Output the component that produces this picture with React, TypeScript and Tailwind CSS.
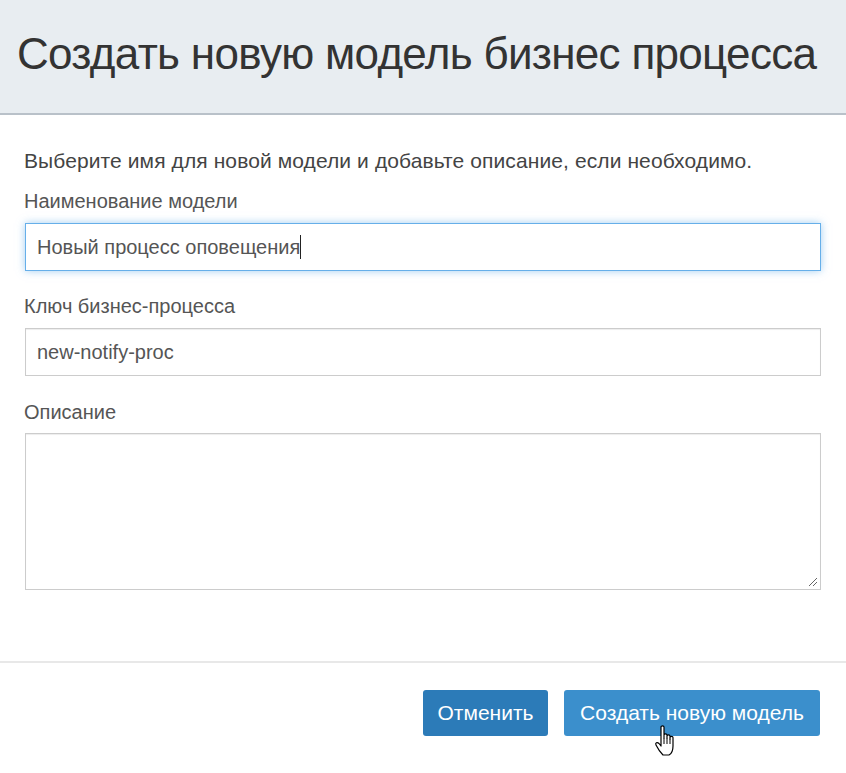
import React from "react";

export default function App() {
  return (
    <div className="w-[846px] h-[773px] bg-white relative overflow-hidden" style={{ fontFamily: '"Liberation Sans", Arial, sans-serif' }}>
      <div className="h-[115px] bg-[#e8edf1] border-b-2 border-[#b9c1c9] pl-[17px] pt-[32px]">
        <h1 className="text-[44px] leading-none tracking-[-0.7px] text-[#333] font-normal whitespace-nowrap">Создать новую модель бизнес процесса</h1>
      </div>
      <div className="px-[25px] pt-[34px]">
        <p className="text-[21px] text-[#444] leading-[24px] tracking-[0.1px] -ml-[1px]">Выберите имя для новой модели и добавьте описание, если необходимо.</p>
        <label className="block mt-[16px] text-[20px] text-[#555] leading-[24px] -ml-[1px]">Наименование модели</label>
        <div className="mt-[10px] h-[48px] border border-[#66afe9] shadow-[0_0_8px_rgba(102,175,233,0.6)] flex items-center px-[11px] text-[20px] text-[#555]">
          <span>Новый процесс оповещения</span>
          <span className="w-px h-[24px] bg-[#222]" />
        </div>
        <label className="block mt-[23px] text-[20px] text-[#555] leading-[24px] -ml-[1px]">Ключ бизнес-процесса</label>
        <div className="mt-[10px] h-[48px] border border-[#ccc] shadow-[inset_0_1px_1px_rgba(0,0,0,0.075)] flex items-center px-[11px] text-[20px] text-[#555]">
          new-notify-proc
        </div>
        <label className="block mt-[24px] text-[20px] text-[#555] leading-[24px] -ml-[1px]">Описание</label>
        <div className="mt-[9px] h-[157px] border border-[#ccc] shadow-[inset_0_1px_1px_rgba(0,0,0,0.075)] relative">
          <svg className="absolute right-[2px] bottom-[2px]" width="11" height="11" viewBox="0 0 11 11">
            <path d="M10 2 L2 10 M10 6 L6 10" stroke="#666" strokeWidth="1" />
          </svg>
        </div>
      </div>
      <div className="mt-[71px] border-t-2 border-[#e8e8e8]" />
      <div className="flex justify-end gap-[16px] pr-[26px] pt-[27px]">
        <button className="h-[46px] w-[125px] rounded-[3px] bg-[#2c7bb8] text-white text-[21px]">Отменить</button>
        <button className="h-[46px] w-[256px] rounded-[3px] bg-[#3b8fcc] text-white text-[21px]">Создать новую модель</button>
      </div>
      <svg className="absolute left-[654px] top-[724px]" width="26" height="36" viewBox="0 0 26 36">
        <path d="M7 3 C7 1.5 10 1.5 10 3 L10 14 L10 11 C10 9.5 13 9.5 13 11 L13 14 L13 12 C13 10.5 16 10.5 16 12 L16 15 L16 13.5 C16 12 19 12 19 13.5 L19 22 C19 27 17 30 15 31 L9 31 C7 29 4 25 2 21 C1 19 3 17.5 5 19.5 L7 22 Z" fill="#fff" stroke="#000" strokeWidth="1.2" strokeLinejoin="round" />
        <path d="M10 14 L10 20 M13 14 L13 20 M16 15 L16 20" stroke="#000" strokeWidth="1" />
      </svg>
    </div>
  );
}
